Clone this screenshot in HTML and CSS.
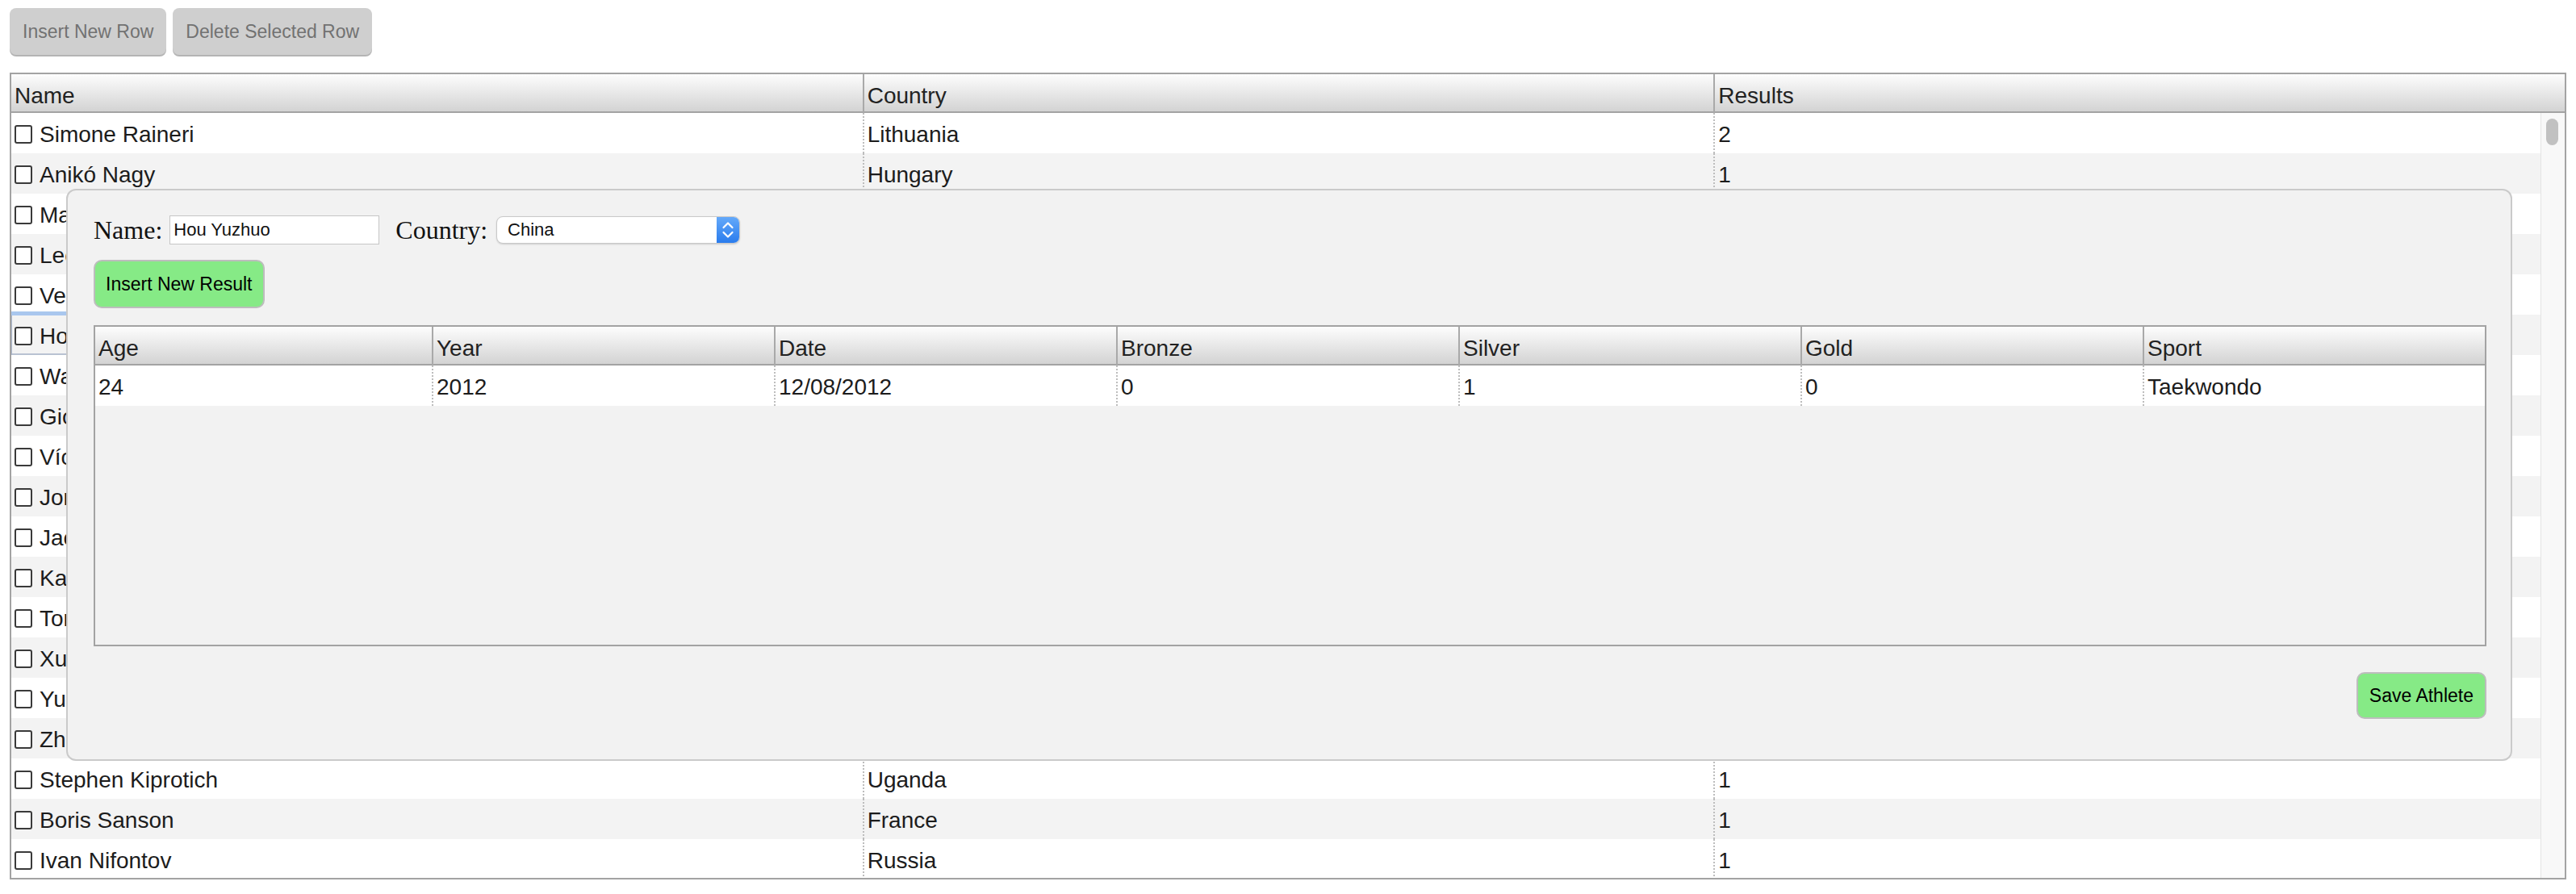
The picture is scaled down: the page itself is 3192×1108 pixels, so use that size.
FILE: index.html
```html
<!DOCTYPE html>
<html>
<head>
<meta charset="utf-8">
<link rel="stylesheet" href="styles.css">
</head>
<body>
<div class="page">
  <div class="toolbar">
    <button class="tbtn">Insert New Row</button>
    <button class="tbtn">Delete Selected Row</button>
  </div>
  <div class="table">
    <div class="thead three">
      <div class="th">Name</div>
      <div class="th">Country</div>
      <div class="th">Results</div>
    </div>
    <div class="tbody">
      <div class="rows">
        <div class="row three"><div class="td"><span class="cb"></span>Simone Raineri</div><div class="td">Lithuania</div><div class="td">2</div></div>
        <div class="row three alt"><div class="td"><span class="cb"></span>Anikó Nagy</div><div class="td">Hungary</div><div class="td">1</div></div>
        <div class="row three"><div class="td"><span class="cb"></span>Maria Ivanova</div><div class="td">Russia</div><div class="td">1</div></div>
        <div class="row three alt"><div class="td"><span class="cb"></span>Lee Hyun-woo</div><div class="td">South Korea</div><div class="td">1</div></div>
        <div class="row three"><div class="td"><span class="cb"></span>Vera Zvonareva</div><div class="td">Russia</div><div class="td">1</div></div>
        <div class="row three alt sel"><div class="td focus"><span class="cb"></span>Hou Yuzhuo</div><div class="td">China</div><div class="td">1</div></div>
        <div class="row three"><div class="td"><span class="cb"></span>Wang Hao</div><div class="td">China</div><div class="td">1</div></div>
        <div class="row three alt"><div class="td"><span class="cb"></span>Giovanni Abagnale</div><div class="td">Italy</div><div class="td">1</div></div>
        <div class="row three"><div class="td"><span class="cb"></span>Víctor Estrella</div><div class="td">Dominican Republic</div><div class="td">1</div></div>
        <div class="row three alt"><div class="td"><span class="cb"></span>Jonas Müller</div><div class="td">Germany</div><div class="td">1</div></div>
        <div class="row three"><div class="td"><span class="cb"></span>Jacob Wukie</div><div class="td">United States</div><div class="td">1</div></div>
        <div class="row three alt"><div class="td"><span class="cb"></span>Kai Huang</div><div class="td">China</div><div class="td">1</div></div>
        <div class="row three"><div class="td"><span class="cb"></span>Tom Daley</div><div class="td">Great Britain</div><div class="td">1</div></div>
        <div class="row three alt"><div class="td"><span class="cb"></span>Xu Lijia</div><div class="td">China</div><div class="td">1</div></div>
        <div class="row three"><div class="td"><span class="cb"></span>Yuki Ota</div><div class="td">Japan</div><div class="td">1</div></div>
        <div class="row three alt"><div class="td"><span class="cb"></span>Zhang Jike</div><div class="td">China</div><div class="td">1</div></div>
        <div class="row three"><div class="td"><span class="cb"></span>Stephen Kiprotich</div><div class="td">Uganda</div><div class="td">1</div></div>
        <div class="row three alt"><div class="td"><span class="cb"></span>Boris Sanson</div><div class="td">France</div><div class="td">1</div></div>
        <div class="row three"><div class="td"><span class="cb"></span>Ivan Nifontov</div><div class="td">Russia</div><div class="td">1</div></div>
      </div>
      <div class="vscroll"><div class="thumb"></div></div>
    </div>

    <div class="modal">
      <div class="form-row">
        <span class="lbl">Name:</span>
        <input class="txt" type="text" value="Hou Yuzhuo">
        <span class="lbl lbl-country">Country:</span>
        <div class="select">
          <span class="sel-text">China</span>
          <span class="sel-arrow">
            <svg width="28" height="34" viewBox="0 0 28 34"><polyline points="8.5,14 14,8.5 19.5,14" fill="none" stroke="#fff" stroke-width="2.2" stroke-linecap="round" stroke-linejoin="round"/><polyline points="8.5,20 14,25.5 19.5,20" fill="none" stroke="#fff" stroke-width="2.2" stroke-linecap="round" stroke-linejoin="round"/></svg>
          </span>
        </div>
      </div>
      <div class="btn-line">
        <button class="gbtn gbtn-insert">Insert New Result</button>
      </div>
      <div class="rgrid">
        <div class="thead seven">
          <div class="th">Age</div>
          <div class="th">Year</div>
          <div class="th">Date</div>
          <div class="th">Bronze</div>
          <div class="th">Silver</div>
          <div class="th">Gold</div>
          <div class="th">Sport</div>
        </div>
        <div class="row seven white">
          <div class="td">24</div>
          <div class="td">2012</div>
          <div class="td">12/08/2012</div>
          <div class="td">0</div>
          <div class="td">1</div>
          <div class="td">0</div>
          <div class="td">Taekwondo</div>
        </div>
      </div>
      <div class="footer">
        <button class="gbtn gbtn-save">Save Athlete</button>
      </div>
    </div>
  </div>
</div>
</body>
</html>
```

FILE: styles.css
```css
* { box-sizing: border-box; }

body {
  margin: 0;
  background: #ffffff;
  font-family: "Liberation Sans", Arial, Helvetica, sans-serif;
  color: #1c1c1c;
}

.page {
  padding: 10px 12px 0 12px;
}

.toolbar {
  display: flex;
  gap: 8px;
  height: 60px;
}

.tbtn {
  font-family: "Liberation Sans", Arial, sans-serif;
  font-size: 23px;
  color: #727272;
  background: #cfcfcf;
  border: none;
  border-radius: 8px;
  height: 58px;
  padding: 0 16px;
  box-shadow: 0 2px 0 #b4b4b4;
}

.table {
  position: relative;
  margin-top: 20px;
  border: 2px solid #a3a3a3;
}

.three { display: grid; grid-template-columns: repeat(3, 1fr); }
.seven { display: grid; grid-template-columns: 417px repeat(6, 424px); }

.thead {
  height: 48px;
  background: linear-gradient(#fdfdfd, #d3d3d3);
  border-bottom: 2px solid #a3a3a3;
}

.th {
  font-size: 28px;
  line-height: 46px;
  padding: 4px 0 0 4px;
  color: #222;
  white-space: nowrap;
}

.th + .th { border-left: 2px solid #a9a9a9; }

.tbody {
  position: relative;
  height: 948px;
  overflow: hidden;
}

.row {
  height: 50px;
  background: #ffffff;
}

.row.alt { background: #f3f3f3; }

.td {
  position: relative;
  display: flex;
  align-items: center;
  font-size: 28px;
  padding: 3px 0 0 4px;
  white-space: nowrap;
  overflow: hidden;
  color: #1c1c1c;
}

.td + .td { border-left: 2px dotted #bdbdbd; }

.td.focus {
  overflow: visible;
  box-shadow: inset 1px 0 0 #aab6cc, inset 0 -2px 0 #b9c2d2;
}

.td.focus::before {
  content: "";
  position: absolute;
  left: 0;
  right: 0;
  top: -4px;
  height: 5px;
  background: #a9c7ee;
}

.cb {
  flex: none;
  width: 22px;
  height: 23px;
  border: 2px solid #3a3a3a;
  border-radius: 3px;
  background: #fff;
  margin-right: 9px;
}

.vscroll {
  position: absolute;
  top: 0;
  right: 0;
  width: 30px;
  height: 100%;
  background: #f8f8f8;
  border-left: 1px solid #e4e4e4;
}

.thumb {
  position: absolute;
  left: 6px;
  top: 7px;
  width: 15px;
  height: 33px;
  border-radius: 8px;
  background: #c1c1c1;
}

/* modal */
.modal {
  position: absolute;
  left: 68px;
  top: 142px;
  right: 65px;
  background: #f2f2f2;
  border: 2px solid #cacaca;
  border-radius: 12px;
  padding: 31px 30px 50px 32px;
}

.form-row {
  display: flex;
  align-items: center;
  height: 36px;
}

.lbl {
  font-family: "Liberation Serif", "Times New Roman", serif;
  font-size: 32px;
  color: #111;
  margin-right: 9px;
}

.lbl-country {
  margin-left: 20px;
  margin-right: 11px;
}

.txt {
  width: 260px;
  height: 36px;
  border: 1px solid #c6c6c6;
  background: #fff;
  font-family: "Liberation Sans", Arial, sans-serif;
  font-size: 22px;
  color: #111;
  padding: 0 4px;
  outline: none;
}

.select {
  display: flex;
  width: 302px;
  height: 34px;
  background: #fff;
  border: 1px solid #c9c9c9;
  border-radius: 8px;
  box-shadow: 0 1px 2px rgba(0, 0, 0, 0.15);
  overflow: hidden;
}

.sel-text {
  flex: 1;
  font-size: 22px;
  line-height: 32px;
  padding-left: 13px;
  color: #111;
}

.sel-arrow {
  width: 28px;
  height: 100%;
  display: flex;
  align-items: center;
  justify-content: center;
  background: linear-gradient(#64a9fa, #2a7ced);
}

.sel-arrow svg { display: block; }

.btn-line {
  display: flex;
  margin-top: 19px;
}

.gbtn {
  font-family: "Liberation Sans", Arial, sans-serif;
  font-size: 23px;
  color: #000;
  background: #86ea86;
  border: 2px solid #bdbdbd;
  border-radius: 10px;
  padding: 0 14px;
}

.gbtn-insert { height: 60px; padding: 0 13px; }
.gbtn-save { height: 58px; }

.rgrid {
  margin-top: 21px;
  height: 398px;
  border: 2px solid #a3a3a3;
  background: #f2f2f2;
}

.row.white { background: #fff; }

.footer {
  display: flex;
  justify-content: flex-end;
  margin-top: 32px;
}
```
